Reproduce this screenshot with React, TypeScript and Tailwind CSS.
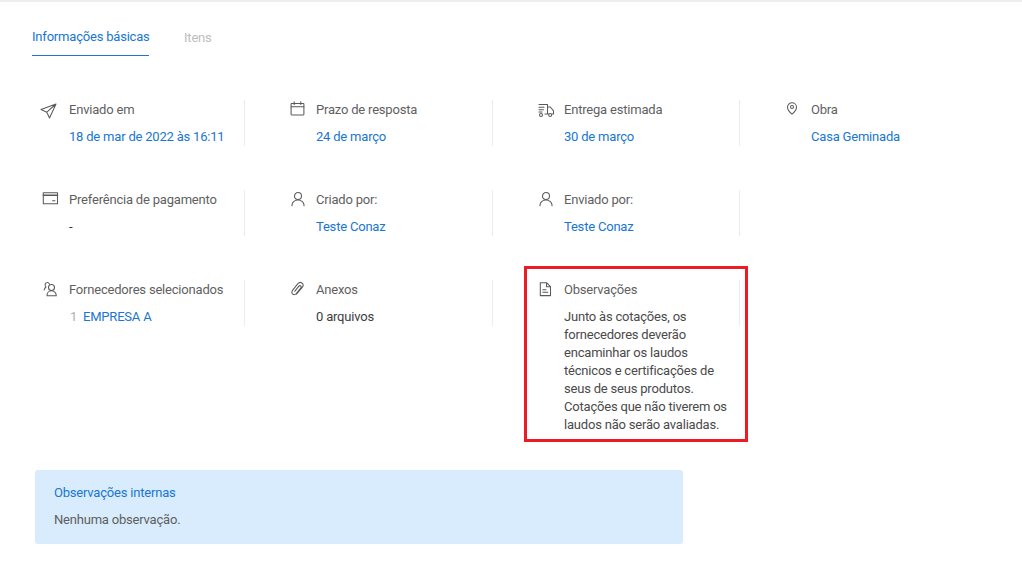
import type { ReactNode } from "react"

function Icon({ children }: { children: ReactNode }) {
  return (
    <svg viewBox="0 0 20 20" className="h-5 w-5 text-[#5a5a5a]" fill="none" stroke="currentColor" strokeWidth="1.05" strokeLinejoin="round" strokeLinecap="round">
      {children}
    </svg>
  )
}

const SendIcon = () => (
  <Icon>
    <path d="M16 4 1 9.500l5.800 2.700 2.700 5.800zM16 4l-9.200 8.200" />
  </Icon>
)

const CalendarIcon = () => (
  <Icon>
    <rect x="4.100" y="3.500" width="12.800" height="11.400" rx="0.600" />
    <path d="M4.100 6.800h12.800M7.200 1.800v2.600M13.800 1.800v2.600" />
  </Icon>
)

const TruckIcon = () => (
  <Icon>
    <path d="M4 4.500h8.500v9.500H10M12.500 7h2.800l3.200 3.800v3.200h-1.400M12.500 14h1.200M4 7.200h5M4 9.700h4.500M4 12h3" />
    <circle cx="6" cy="15" r="1.500" />
    <circle cx="15.200" cy="15" r="1.500" />
  </Icon>
)

const PinIcon = () => (
  <Icon>
    <path d="M10 14.200c-2.800-2.400-4.500-4.600-4.500-7A4.500 4.500 0 0 1 14.500 7.200c0 2.400-1.700 4.600-4.500 7z" />
    <circle cx="10" cy="7" r="1.500" />
  </Icon>
)

const CardIcon = () => (
  <Icon>
    <rect x="3.300" y="2.700" width="14.200" height="11" />
    <path d="M3.300 5.300h14.200" strokeWidth="1.500" />
    <path d="M12.500 10.800h2.500" />
  </Icon>
)

const UserIcon = () => (
  <Icon>
    <circle cx="11" cy="6" r="3.500" />
    <path d="M5 15.800v-.8c0-2.600 2.400-5 6-5s6 2.400 6 5v.8" />
  </Icon>
)

const UsersIcon = () => (
  <Icon>
    <circle cx="11.500" cy="7.500" r="3" />
    <path d="M7 15.800c0-3 2-5 4.500-5s4.800 2 4.800 5zM9.500 4.200C8.800 2.800 7.600 2.300 6.800 2.600 5 3 4.600 5.500 6 7c-.8.600-1.600 1.600-1.800 3" />
  </Icon>
)

const ClipIcon = () => (
  <Icon>
    <path d="M9.500 14.200l5.700-6.800c1.300-1.600.9-3.400-.2-4.300-1.200-1-3-.7-4.100.6l-5.200 6.400c-1.500 1.800-.8 3.400.1 4.100 1 .8 2.500.5 3.500-.7l4.400-5.400c.7-.9.500-1.700 0-2.100-.6-.5-1.400-.3-2 .4l-4 4.900" />
  </Icon>
)

const DocIcon = () => (
  <Icon>
    <path d="M5.300 2.700h6.200l4 4v8.900H5.300zM11.500 2.700v4h4M7.800 9.800h3.200M7.800 12.300h5" />
  </Icon>
)

function Cell({ icon, label, children, divider = true }: { icon: ReactNode; label: string; children?: ReactNode; divider?: boolean }) {
  return (
    <div className="relative h-[46px] pl-[71px]">
      <div className="absolute left-[42px] top-0">{icon}</div>
      <div className="h-[19px] leading-[19px] text-[#5f5f5f]">{label}</div>
      <div className="mt-[9px] leading-[18px]">{children}</div>
      {divider && <div className="absolute right-0 top-0 h-[46px] w-px bg-[#ececec]" />}
    </div>
  )
}

export default function App() {
  return (
    <div className="h-[580px] w-[1022px] overflow-hidden bg-white font-['Roboto',sans-serif] text-[13px] tracking-[-0.2px]">
      <div className="h-[2px] bg-[#eeeeee]" />

      <div className="flex gap-[35px] pl-8 pt-[26px]">
        <div className="h-[28px] w-[117px] border-b border-[#1976d2] leading-[18px] whitespace-nowrap text-[#1976d2]">Informações básicas</div>
        <div className="leading-[18px] pt-[1px] text-[#bdbdbd]">Itens</div>
      </div>

      <div className="-ml-[2px] mt-[44px] grid grid-cols-[247px_248px_247px_248px] gap-y-[44px]">
        <Cell icon={<SendIcon />} label="Enviado em">
          <span className="text-[#1976d2]">18 de mar de 2022 às 16:11</span>
        </Cell>
        <Cell icon={<CalendarIcon />} label="Prazo de resposta">
          <span className="text-[#1976d2]">24 de março</span>
        </Cell>
        <Cell icon={<TruckIcon />} label="Entrega estimada">
          <span className="text-[#1976d2]">30 de março</span>
        </Cell>
        <Cell icon={<PinIcon />} label="Obra" divider={false}>
          <span className="text-[#1976d2]">Casa Geminada</span>
        </Cell>

        <Cell icon={<CardIcon />} label="Preferência de pagamento">
          <span className="text-[#333333]">-</span>
        </Cell>
        <Cell icon={<UserIcon />} label="Criado por:">
          <span className="text-[#1976d2]">Teste Conaz</span>
        </Cell>
        <Cell icon={<UserIcon />} label="Enviado por:">
          <span className="text-[#1976d2]">Teste Conaz</span>
        </Cell>
        <div />

        <Cell icon={<UsersIcon />} label="Fornecedores selecionados">
          <span className="ml-[1px] mr-[4px] inline-block w-[9px] text-[#b0b0b0]">1</span>
          <span className="text-[#1976d2]">EMPRESA A</span>
        </Cell>
        <Cell icon={<ClipIcon />} label="Anexos">
          <span className="text-[#3d3d3d]">0 arquivos</span>
        </Cell>
        <Cell icon={<DocIcon />} label="Observações">
          <div className="w-[168px] text-[#4a4a4a]">
            Junto às cotações, os fornecedores deverão encaminhar os laudos técnicos e certificações de seus de seus produtos. Cotações que não tiverem os laudos não serão avaliadas.
          </div>
          <div className="absolute left-[31px] top-[-14px] h-[176px] w-[224px] border-[3px] border-[#ed1c24]" />
        </Cell>
        <div />
      </div>

      <div className="ml-[35px] mt-[144px] h-[74px] w-[648px] rounded-[3px] bg-[#d8ecfd] px-[19px] pt-[13px]">
        <div className="leading-[19px] text-[#1976d2]">Observações internas</div>
        <div className="mt-[8px] leading-[19px] text-[#5f5f5f]">Nenhuma observação.</div>
      </div>
    </div>
  )
}
